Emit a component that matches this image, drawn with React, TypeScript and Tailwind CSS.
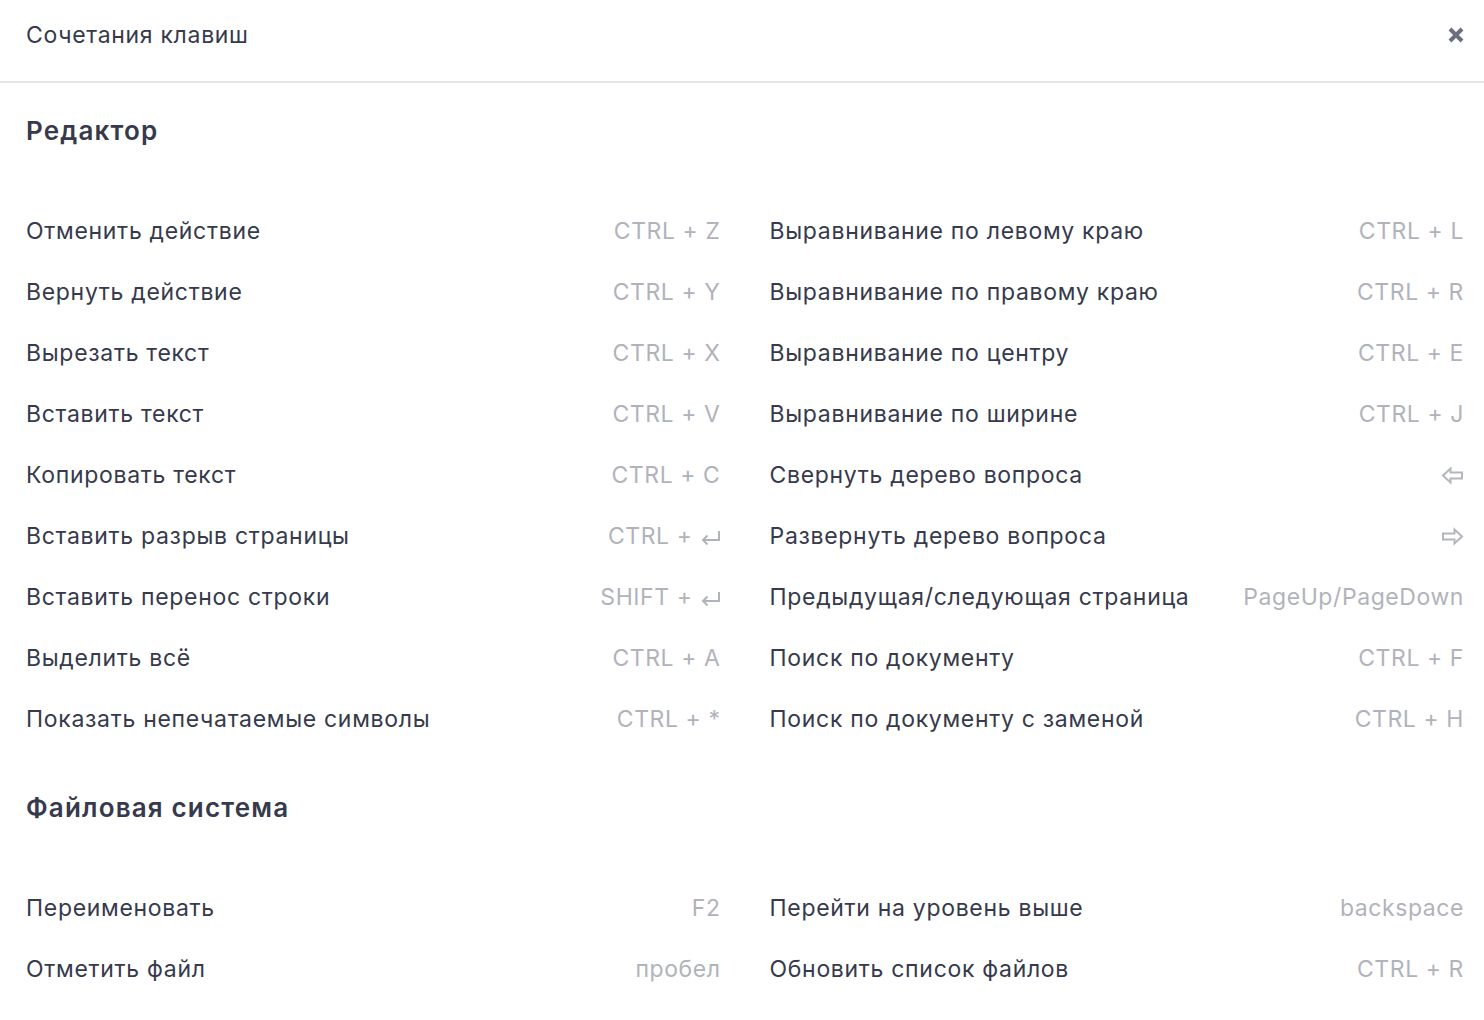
import React from "react";

type Key = { label: string; keys: React.ReactNode };

const Enter = () => (
  <svg width="21" height="16" viewBox="0 0 21 16" fill="none" stroke="#b1b3bb" strokeWidth="2">
    <path d="M19 2 V11 H3" />
    <path d="M7.5 6.5 L3 11 L7.5 15.5" />
  </svg>
);

const ArrowLeft = () => (
  <svg width="23" height="19" viewBox="0 0 23 19" fill="none" stroke="#b4b6be" strokeWidth="2" strokeLinejoin="miter">
    <path d="M2 9.5 L9.5 2.5 L9.5 6.5 L21 6.5 L21 12.5 L9.5 12.5 L9.5 16.5 Z" />
  </svg>
);

const ArrowRight = () => (
  <svg width="23" height="19" viewBox="0 0 23 19" fill="none" stroke="#b4b6be" strokeWidth="2" strokeLinejoin="miter">
    <path d="M21 9.5 L13.5 2.5 L13.5 6.5 L2 6.5 L2 12.5 L13.5 12.5 L13.5 16.5 Z" />
  </svg>
);

const editorLeft: Key[] = [
  { label: "Отменить действие", keys: "CTRL + Z" },
  { label: "Вернуть действие", keys: "CTRL + Y" },
  { label: "Вырезать текст", keys: "CTRL + X" },
  { label: "Вставить текст", keys: "CTRL + V" },
  { label: "Копировать текст", keys: "CTRL + C" },
  { label: "Вставить разрыв страницы", keys: <>CTRL + <Enter /></> },
  { label: "Вставить перенос строки", keys: <>SHIFT + <Enter /></> },
  { label: "Выделить всё", keys: "CTRL + A" },
  { label: "Показать непечатаемые символы", keys: "CTRL + *" },
];

const editorRight: Key[] = [
  { label: "Выравнивание по левому краю", keys: "CTRL + L" },
  { label: "Выравнивание по правому краю", keys: "CTRL + R" },
  { label: "Выравнивание по центру", keys: "CTRL + E" },
  { label: "Выравнивание по ширине", keys: "CTRL + J" },
  { label: "Свернуть дерево вопроса", keys: <ArrowLeft /> },
  { label: "Развернуть дерево вопроса", keys: <ArrowRight /> },
  { label: "Предыдущая/следующая страница", keys: "PageUp/PageDown" },
  { label: "Поиск по документу", keys: "CTRL + F" },
  { label: "Поиск по документу с заменой", keys: "CTRL + H" },
];

const filesLeft: Key[] = [
  { label: "Переименовать", keys: "F2" },
  { label: "Отметить файл", keys: "пробел" },
];

const filesRight: Key[] = [
  { label: "Перейти на уровень выше", keys: "backspace" },
  { label: "Обновить список файлов", keys: "CTRL + R" },
];

function Row({ item }: { item: Key }) {
  return (
    <div className="flex h-[61px] items-center justify-between">
      <span className="text-[23px] tracking-[0.03em] text-[#363a4c]">{item.label}</span>
      <span className="flex items-center gap-[7px] text-[23px] tracking-[0.025em] text-[#b1b3bb]">{item.keys}</span>
    </div>
  );
}

function Section({ title, left, right }: { title: string; left: Key[]; right: Key[] }) {
  return (
    <section>
      <h2 className="h-[32px] text-[26px] font-semibold leading-[32px] tracking-[0.045em] text-[#363a4c]">{title}</h2>
      <div className="mt-[54px] grid grid-cols-2 gap-x-[49px]">
        <div>
          {left.map((k) => (
            <Row key={k.label} item={k} />
          ))}
        </div>
        <div>
          {right.map((k) => (
            <Row key={k.label} item={k} />
          ))}
        </div>
      </div>
    </section>
  );
}

export default function App() {
  return (
    <div
      className="h-[1020px] w-[1484px] overflow-hidden bg-white"
      style={{ fontFamily: "Inter, 'Noto Sans', sans-serif" }}
    >
      <header className="flex h-[83px] items-start justify-between border-b-2 border-[#e6e6e6] pl-[26px] pr-[20px] pt-[20px]">
        <h1 className="text-[23px] leading-[30px] tracking-[0.03em] text-[#363a4c]">Сочетания клавиш</h1>
        <button className="mt-[7px]" aria-label="Закрыть">
          <svg width="16" height="16" viewBox="0 0 16 16" stroke="#6b6e7c" strokeWidth="4" strokeLinecap="butt">
            <path d="M2 2 L14 14 M14 2 L2 14" />
          </svg>
        </button>
      </header>
      <main className="flex flex-col gap-[42px] pl-[26px] pr-[20px] pt-[32px]">
        <Section title="Редактор" left={editorLeft} right={editorRight} />
        <Section title="Файловая система" left={filesLeft} right={filesRight} />
      </main>
    </div>
  );
}
